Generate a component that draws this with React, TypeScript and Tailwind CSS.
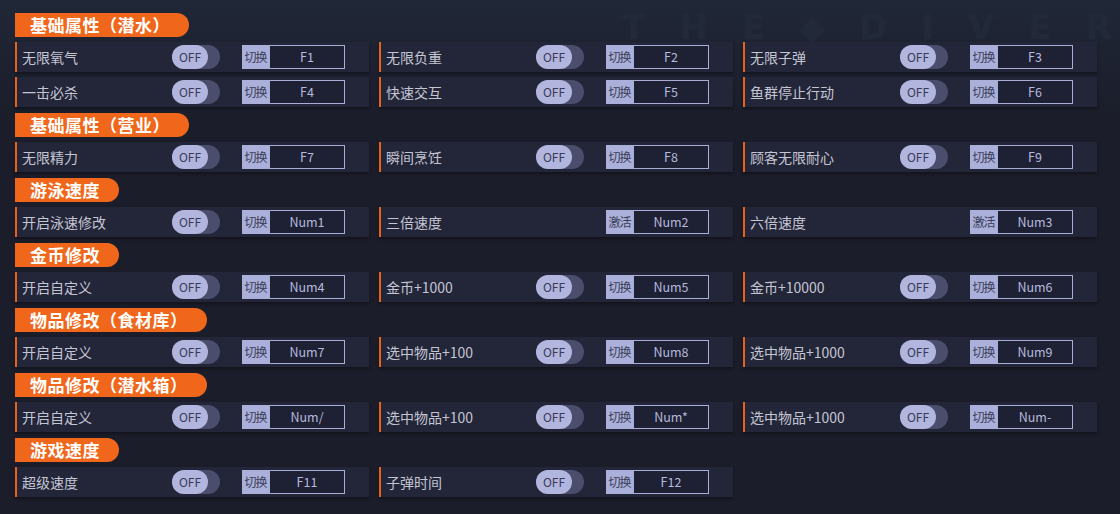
import React from 'react'

type Item = { label: string; key: string; mode?: 'toggle' | 'activate' }
type Section = { title: string; items: Item[] }

const SECTIONS: Section[] = [
  {
    title: '基础属性（潜水）',
    items: [
      { label: '无限氧气', key: 'F1' },
      { label: '无限负重', key: 'F2' },
      { label: '无限子弹', key: 'F3' },
      { label: '一击必杀', key: 'F4' },
      { label: '快速交互', key: 'F5' },
      { label: '鱼群停止行动', key: 'F6' },
    ],
  },
  {
    title: '基础属性（营业）',
    items: [
      { label: '无限精力', key: 'F7' },
      { label: '瞬间烹饪', key: 'F8' },
      { label: '顾客无限耐心', key: 'F9' },
    ],
  },
  {
    title: '游泳速度',
    items: [
      { label: '开启泳速修改', key: 'Num1' },
      { label: '三倍速度', key: 'Num2', mode: 'activate' },
      { label: '六倍速度', key: 'Num3', mode: 'activate' },
    ],
  },
  {
    title: '金币修改',
    items: [
      { label: '开启自定义', key: 'Num4' },
      { label: '金币+1000', key: 'Num5' },
      { label: '金币+10000', key: 'Num6' },
    ],
  },
  {
    title: '物品修改（食材库）',
    items: [
      { label: '开启自定义', key: 'Num7' },
      { label: '选中物品+100', key: 'Num8' },
      { label: '选中物品+1000', key: 'Num9' },
    ],
  },
  {
    title: '物品修改（潜水箱）',
    items: [
      { label: '开启自定义', key: 'Num/' },
      { label: '选中物品+100', key: 'Num*' },
      { label: '选中物品+1000', key: 'Num-' },
    ],
  },
  {
    title: '游戏速度',
    items: [
      { label: '超级速度', key: 'F11' },
      { label: '子弹时间', key: 'F12' },
    ],
  },
]

const FONT = { fontFamily: '"Noto Sans CJK SC", "Noto Sans", sans-serif' }

function Row({ item }: { item: Item }) {
  const activate = item.mode === 'activate'
  return (
    <div className="flex h-[30px] items-center border-l-2 border-[#e8621c] bg-[#232539] shadow-[0_2px_3px_rgba(0,0,0,0.35)]">
      <div className="w-[155px] pl-[5px] text-[14px] text-[#c3c5d3]">{item.label}</div>
      {activate ? (
        <div className="w-[48px]" />
      ) : (
        <div className="flex h-[24px] w-[48px] items-center rounded-full bg-[#4a4d6b]">
          <div className="flex h-[24px] w-[36px] items-center justify-center rounded-full bg-[#b2b6de] text-[12px] text-[#383b58]">
            OFF
          </div>
        </div>
      )}
      <div className="ml-[22px] flex h-[24px] items-stretch">
        <div className="flex w-[27px] items-center justify-center bg-[#abb0da] text-[12px] tracking-[-1px] text-[#3a3d57]">
          {activate ? '激活' : '切换'}
        </div>
        <div className="flex w-[76px] items-center justify-center border border-[#a8add6] bg-[#1e2033] text-[12.5px] text-[#b6bade]">
          {item.key}
        </div>
      </div>
    </div>
  )
}

export default function App() {
  return (
    <div className="relative h-[514px] w-[1120px] overflow-hidden bg-[#1b1d2a]" style={FONT}>
      {/* faint game art behind the top */}
      <div className="absolute inset-x-0 top-0 h-[120px] bg-gradient-to-b from-[#202737] to-transparent" />
      <div className="absolute left-[622px] top-[2px] flex gap-[34px] text-[34px] font-bold text-[#222a39]" style={{ fontFamily: '"DejaVu Sans", sans-serif' }}>
        {['T', 'H', 'E', '◆', 'D', 'I', 'V', 'E', 'R'].map((c, i) => (
          <span key={i}>{c}</span>
        ))}
      </div>

      <div className="relative flex flex-col gap-[6px] pl-[15px] pt-[13px]">
        {SECTIONS.map((s) => (
          <div key={s.title} className="flex flex-col gap-[5px]">
            <div className="flex">
              <div className="flex h-[24px] items-center rounded-tl-md rounded-r-full bg-[#f0661a] pl-[15px] pr-[19px] text-[17px] font-bold tracking-[0.5px] text-white">
                {s.title}
              </div>
            </div>
            <div className="grid w-[1082px] grid-cols-[354px_354px_354px] gap-x-[10px] gap-y-[5px]">
              {s.items.map((it, i) => (
                <Row key={i} item={it} />
              ))}
            </div>
          </div>
        ))}
      </div>
    </div>
  )
}
